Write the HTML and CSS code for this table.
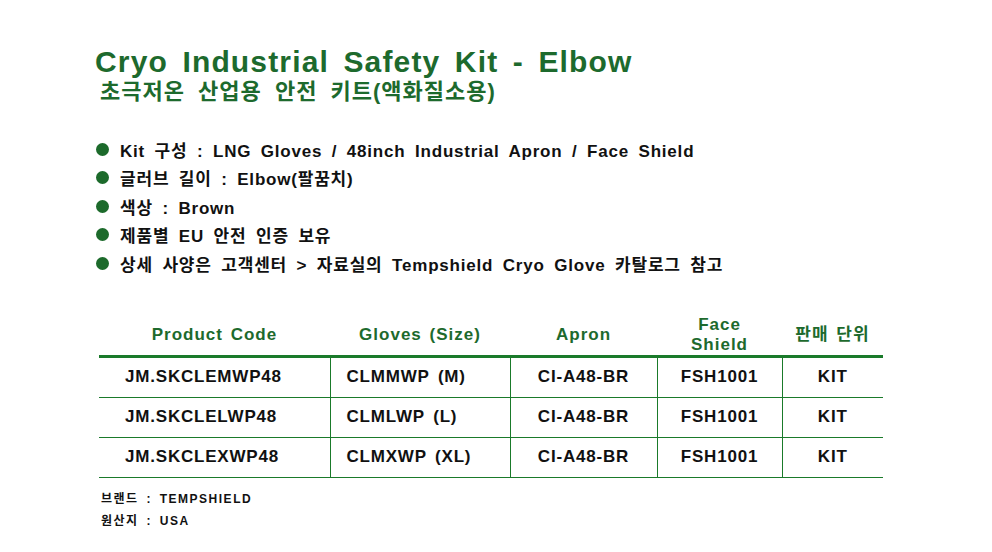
FILE: index.html
```html
<!DOCTYPE html>
<html lang="ko">
<head>
<meta charset="utf-8">
<link rel="stylesheet" href="styles.css">
</head>
<body>
<div class="page">
  <h1 class="title">Cryo Industrial Safety Kit - Elbow</h1>
  <p class="subtitle">초극저온 산업용 안전 키트(액화질소용)</p>
  <ul class="features">
    <li>Kit 구성 : LNG Gloves / 48inch Industrial Apron / Face Shield</li>
    <li>글러브 길이 : Elbow(팔꿈치)</li>
    <li>색상 : Brown</li>
    <li>제품별 EU 안전 인증 보유</li>
    <li>상세 사양은 고객센터 &gt; 자료실의 Tempshield Cryo Glove 카탈로그 참고</li>
  </ul>
  <table class="spec">
    <thead>
      <tr>
        <th class="c1">Product Code</th>
        <th class="c2">Gloves (Size)</th>
        <th class="c3">Apron</th>
        <th class="c4">Face<br>Shield</th>
        <th class="c5">판매 단위</th>
      </tr>
    </thead>
    <tbody>
      <tr><td class="c1 left1">JM.SKCLEMWP48</td><td class="c2 left2">CLMMWP (M)</td><td class="c3">CI-A48-BR</td><td class="c4">FSH1001</td><td class="c5">KIT</td></tr>
      <tr><td class="c1 left1">JM.SKCLELWP48</td><td class="c2 left2">CLMLWP (L)</td><td class="c3">CI-A48-BR</td><td class="c4">FSH1001</td><td class="c5">KIT</td></tr>
      <tr><td class="c1 left1">JM.SKCLEXWP48</td><td class="c2 left2">CLMXWP (XL)</td><td class="c3">CI-A48-BR</td><td class="c4">FSH1001</td><td class="c5">KIT</td></tr>
    </tbody>
  </table>
  <div class="meta">
    <p>브랜드 : TEMPSHIELD</p>
    <p>원산지 : USA</p>
  </div>
</div>
</body>
</html>
```

FILE: styles.css
```css
html, body {
  margin: 0;
  padding: 0;
  background: #ffffff;
}
body {
  font-family: "Liberation Sans", "Noto Sans CJK KR", sans-serif;
  color: #111111;
  font-weight: bold;
}
.page {
  width: 992px;
  height: 552px;
  padding: 45px 0 0 95px;
  box-sizing: border-box;
  overflow: hidden;
}
.title {
  margin: 0;
  font-size: 30px;
  line-height: 34px;
  color: #1d6a2d;
  letter-spacing: 1.15px;
  word-spacing: 5px;
}
.subtitle {
  margin: 0 0 0 5px;
  font-size: 22px;
  line-height: 26px;
  color: #1d6a2d;
  letter-spacing: 1px;
  word-spacing: 6px;
}
.features {
  list-style: none;
  margin: 30px 0 0 0;
  padding: 0;
}
.features li {
  display: flex;
  align-items: center;
  height: 28.5px;
  font-size: 17px;
  letter-spacing: 0.8px;
  word-spacing: 4px;
  white-space: pre;
}
.features li::before {
  content: "";
  width: 13px;
  height: 13px;
  border-radius: 50%;
  background: #1c6a2b;
  margin: 0 11px 0 1px;
  flex: none;
}
.spec {
  margin: 32px 0 0 4px;
  border-collapse: collapse;
  width: 784px;
  table-layout: fixed;
}
.spec th {
  height: 35px;
  padding: 5px 0 0 0;
  font-size: 17px;
  line-height: 20px;
  color: #1d6a2d;
  text-align: center;
  letter-spacing: 1px;
  word-spacing: 2px;
  border-bottom: 3px solid #1a7a2a;
}
.spec td {
  height: 39px;
  padding: 0;
  font-size: 17px;
  text-align: center;
  letter-spacing: 0.8px;
  word-spacing: 3px;
  border-bottom: 1px solid #1a7a2a;
  border-left: 1px solid #1a7a2a;
}
.spec td:first-child {
  border-left: none;
}
.spec .c1 { width: 231px; }
.spec .c2 { width: 180px; }
.spec .c3 { width: 147px; }
.spec .c4 { width: 125px; }
.spec .c5 { width: 101px; }
.spec td.left1 { text-align: left; padding-left: 26px; }
.spec td.left2 { text-align: left; padding-left: 16px; }
.meta {
  margin: 10px 0 0 6px;
  font-size: 12px;
  line-height: 22px;
}
.meta p {
  margin: 0;
  letter-spacing: 1.5px;
  word-spacing: 3px;
}
```
